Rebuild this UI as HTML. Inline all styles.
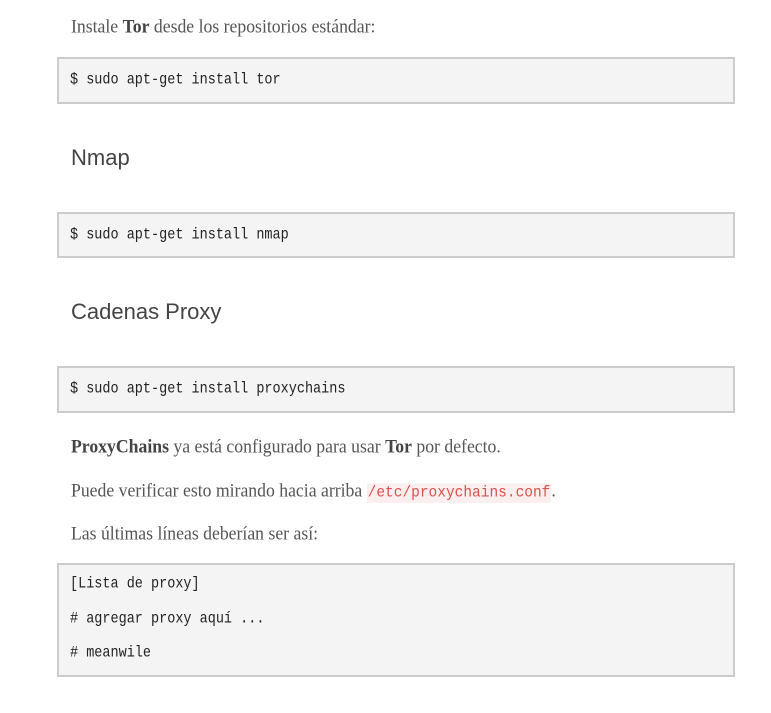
<!DOCTYPE html>
<html><head><meta charset="utf-8"><style>
body{margin:0;width:771px;height:713px;background:#fff;position:relative;overflow:hidden}
.p{position:absolute;left:71px;font-family:"Liberation Serif",serif;font-size:17.7px;color:#555;line-height:20px;white-space:nowrap;transform:scaleY(1.08);transform-origin:left center}
.p b{color:#444}
.h{position:absolute;left:71px;font-family:"Liberation Sans",sans-serif;font-size:22px;color:#444;line-height:26px}
.box{position:absolute;left:57px;width:674px;border:2px solid #ccc;background:#f4f4f4}
.c{position:absolute;left:70px;font-family:"Liberation Mono",monospace;font-size:13.5px;color:#222;line-height:16px;white-space:nowrap;transform:scaleY(1.15);transform-origin:left center}
.k{font-family:"Liberation Mono",monospace;font-size:14.5px;color:#d9534f;background:#fbeeee;padding:1px 1px}
</style></head><body>
<div class="p" style="top:16px">Instale <b>Tor</b> desde los repositorios estándar:</div>
<div class="box" style="top:57px;height:43px"></div>
<div class="c" style="top:73px">$ sudo apt-get install tor</div>
<div class="h" style="top:145px">Nmap</div>
<div class="box" style="top:212px;height:42px"></div>
<div class="c" style="top:228px">$ sudo apt-get install nmap</div>
<div class="h" style="top:299px">Cadenas Proxy</div>
<div class="box" style="top:366px;height:43px"></div>
<div class="c" style="top:382px">$ sudo apt-get install proxychains</div>
<div class="p" style="top:436px"><b>ProxyChains</b> ya está configurado para usar <b>Tor</b> por defecto.</div>
<div class="p" style="top:480px">Puede verificar esto mirando hacia arriba <span class="k">/etc/proxychains.conf</span>.</div>
<div class="p" style="top:523px">Las últimas líneas deberían ser así:</div>
<div class="box" style="top:563px;height:110px"></div>
<div class="c" style="top:577px">[Lista de proxy]</div>
<div class="c" style="top:612px"># agregar proxy aquí ...</div>
<div class="c" style="top:646px"># meanwile</div>
</body></html>
